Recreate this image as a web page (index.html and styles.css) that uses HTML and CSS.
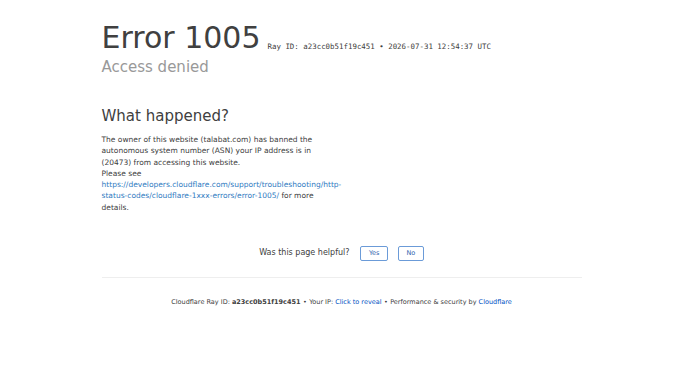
FILE: index.html
```html
<!DOCTYPE html>
<html lang="en-US">
<head>
    <meta charset="UTF-8">
    <meta name="viewport" content="width=device-width, initial-scale=1.0">
    <title>Access denied | talabat.com used Cloudflare to restrict access</title>
    <link rel="stylesheet" href="styles.css">
</head>
<body>
    <div class="wrapper">
        <!-- header: error code, ray id and short title -->
        <header class="header">
            <h1 class="title"><span class="code">Error 1005</span><span class="ray">Ray ID: a23cc0b51f19c451 &bull; 2026-07-31 12:54:37 UTC</span></h1>
            <h2 class="subtitle">Access denied</h2>
        </header>

        <!-- explanation -->
        <section class="details">
            <div class="column">
                <h2 class="section-title">What happened?</h2>
                <p>The owner of this website (talabat.com) has banned the autonomous system number (ASN) your IP address is in (20473) from accessing this website.</p>
                <p>Please see <a href="#">https://developers.cloudflare.com/support/troubleshooting/http-status-codes/cloudflare-1xxx-errors/error-1005/</a> for more details.</p>
            </div>
        </section>

        <!-- feedback -->
        <div class="feedback">
            <span>Was this page helpful?</span>
            <button class="feedback-button">Yes</button>
            <button class="feedback-button">No</button>
        </div>

        <!-- footer -->
        <footer class="footer">
            <span>Cloudflare Ray ID: <strong>a23cc0b51f19c451</strong></span>
            <span class="sep">&bull;</span>
            <span>Your IP: <a href="#">Click to reveal</a></span>
            <span class="sep">&bull;</span>
            <span>Performance &amp; security by <a href="#">Cloudflare</a></span>
        </footer>
    </div>
</body>
</html>
```

FILE: styles.css
```css
/* page */
body {
    margin: 0;
    font-family: "DejaVu Sans", sans-serif;
    font-size: 7.5px;
    line-height: 1.5;
    color: #404040;
    background: #fff;
}

a {
    color: #2f7bbf;
    text-decoration: none;
}

.wrapper {
    width: 480px;
    margin: 0 auto;
}

/* header */
.header {
    padding-top: 20px;
}

.title {
    margin: 0;
    font-size: 30px;
    font-weight: normal;
    line-height: 36px;
}

.code {
    color: #404040;
}

.ray {
    margin-left: 7px;
    font-family: "DejaVu Sans Mono", monospace;
    font-size: 7.43px;
    line-height: 1;
    vertical-align: -1px;
}

.subtitle {
    margin: 0;
    font-size: 15px;
    font-weight: normal;
    line-height: 22.5px;
    color: #999;
}

/* details */
.details {
    margin-top: 26px;
}

.column {
    width: 240px;
}

.section-title {
    margin: 0 0 7px;
    font-size: 15px;
    font-weight: normal;
    line-height: 22.5px;
}

.column p {
    margin: 0;
}

/* feedback */
.feedback {
    display: flex;
    justify-content: center;
    align-items: center;
    gap: 10px;
    margin-top: 33px;
    padding-bottom: 16px;
    border-bottom: 1px solid #eee;
    font-size: 8px;
}

.feedback span {
    margin-right: 1px;
}

.feedback-button {
    height: 15px;
    padding: 0 7.5px;
    border: 1px solid #6b9bd8;
    border-radius: 2px;
    background: #fff;
    color: #2d62ad;
    font-family: "DejaVu Sans", sans-serif;
    font-size: 6.5px;
    cursor: pointer;
}

/* footer */
.footer {
    display: flex;
    justify-content: center;
    gap: 2.4px;
    padding-top: 20px;
    font-size: 6.5px;
    color: #404040;
}

.footer a {
    color: #0051c3;
}
```
